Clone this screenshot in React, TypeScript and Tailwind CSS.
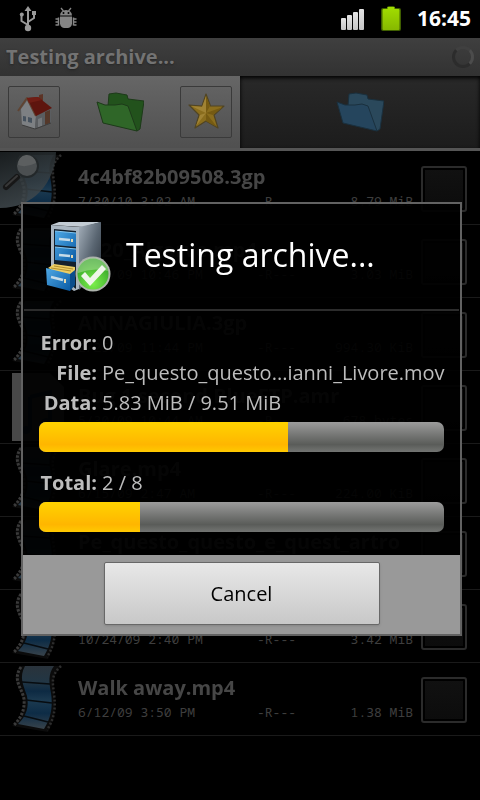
import type { ReactNode } from 'react';

interface ArchiveFile {
  name: string;
  date: string;
  size: string;
  kind: 'video' | 'audio';
}

const files: ArchiveFile[] = [
  { name: '4c4bf82b09508.3gp', date: '7/30/10 3:02 AM', size: '8.79 MiB', kind: 'video' },
  { name: '8520_Algarve.mp4', date: '11/7/09 10:46 PM', size: '3.03 MiB', kind: 'video' },
  { name: 'ANNAGIULIA.3gp', date: '2/25/09 11:44 PM', size: '994.30 KiB', kind: 'video' },
  { name: 'Bug 1 second BlueFTP.amr', date: '5/30/09 10:44 AM', size: '678 bytes', kind: 'audio' },
  { name: 'Glare.mp4', date: '6/15/09 2:47 AM', size: '224.00 KiB', kind: 'video' },
  { name: 'Pe_questo_questo_e_quest_artro', date: '10/24/09 2:38 PM', size: '9.51 MiB', kind: 'video' },
  { name: 'Video_clip.mp4', date: '10/24/09 2:40 PM', size: '3.42 MiB', kind: 'video' },
  { name: 'Walk away.mp4', date: '6/12/09 3:50 PM', size: '1.38 MiB', kind: 'video' },
];

function UsbIcon() {
  return (
    <svg className="h-7 w-5" viewBox="0 0 20 28" fill="none" stroke="#9a9a9a" strokeWidth="2" aria-hidden="true">
      <path d="M10 24V4M10 20L3.500 16V10M10 17L16 13V9" />
      <path d="M10 1l3.500 5h-7z" fill="#9a9a9a" stroke="none" />
      <circle cx="10" cy="23" r="3.200" fill="#9a9a9a" stroke="none" />
      <circle cx="3.800" cy="9.500" r="2" fill="#9a9a9a" stroke="none" />
      <path d="M14 6h4v4h-4z" fill="#9a9a9a" stroke="none" />
    </svg>
  );
}

function DebugIcon() {
  return (
    <svg className="h-6 w-6" viewBox="0 0 24 24" fill="#858585" aria-hidden="true">
      <path d="M6 8.500a6 5.500 0 0 1 12 0z" />
      <path d="M7 1l2.500 3M17 1l-2.500 3" stroke="#858585" strokeWidth="1.300" />
      <path d="M6 9.500h12v7a5 5 0 0 1-4 4.500h-4a5 5 0 0 1-4-4.500z" />
      <path d="M1.500 12h3M1.500 15h3M1.500 18h3M19.500 12h3M19.500 15h3M19.500 18h3M4.500 10.500v8M19.500 10.500v8" fill="none" stroke="#858585" strokeWidth="1.500" />
      <circle cx="9.500" cy="6" r="1" fill="#000" />
      <circle cx="14.500" cy="6" r="1" fill="#000" />
    </svg>
  );
}

function SignalIcon() {
  return (
    <svg className="h-6 w-6" viewBox="0 0 24 24" fill="url(#signal)" aria-hidden="true">
      <defs>
        <linearGradient id="signal" x1="0" y1="0" x2="0" y2="1">
          <stop stopColor="#e4e4e4" />
          <stop offset="1" stopColor="#c4c4c4" />
        </linearGradient>
      </defs>
      <rect x="0" y="11" width="5" height="12" rx="1" />
      <rect x="6" y="8" width="5" height="15" rx="1" />
      <rect x="12" y="5" width="5" height="18" rx="1" />
      <rect x="18" y="2" width="5" height="21" rx="1" />
    </svg>
  );
}

function BatteryIcon() {
  return (
    <svg className="h-7 w-5" viewBox="0 0 20 28" aria-hidden="true">
      <defs>
        <linearGradient id="battery" x1="0" y1="0" x2="0" y2="1">
          <stop stopColor="#a2de00" />
          <stop offset="1" stopColor="#86b800" />
        </linearGradient>
      </defs>
      <path d="M0 5q0-2 2-2h4q0-2 2-2h4q2 0 2 2h4q2 0 2 2v19q0 2-2 2H2q-2 0-2-2z" fill="#3f5e00" />
      <path d="M1.500 5q0-1 1-1H6.500V2h7v2h4q1 0 1 1v19q0 1-1 1h-15q-1 0-1-1z" fill="url(#battery)" />
    </svg>
  );
}

function HouseIcon() {
  return (
    <svg className="size-10" viewBox="0 0 40 40" strokeLinejoin="round" aria-hidden="true">
      <path d="M25 3l4-1v9l-4-3z" fill="#5c3426" />
      <path d="M7 17l6.500-9L22 24l-1 13-13-4z" fill="#7d8083" />
      <path d="M22 24l15-7v14l-16 6z" fill="#5a5d60" />
      <path d="M31 20l5-2v13l-5 2z" fill="#54382a" />
      <path d="M4 19L13 6l9 18" fill="none" stroke="#5f4433" strokeWidth="2" />
      <path d="M13 6l11-1 14 11-16 8z" fill="#5e150e" />
      <path d="M13 6l11-1 4 3-13 3z" fill="#701d14" />
      <path d="M9 24l3 .5v5L9 29zM14 25l4 1v5l-4-1z" fill="#46525e" />
      <path d="M24 27l4-1.500v8.500l-4 1.500z" fill="#74777a" />
      <path d="M8 33l13 4 16-6" fill="none" stroke="#3c3c3c" />
    </svg>
  );
}

function StarIcon() {
  return (
    <svg className="size-10" viewBox="0 0 40 40" strokeLinejoin="round" aria-hidden="true">
      <path d="M20 2l4.500 12L38 14l-10 9 4 13-12-7-11 7 4-13L3 13l13 1z" fill="#8a6d1d" stroke="#504423" strokeWidth="1.200" />
      <path d="M20 4v17l4-7zM37 15l-17 6 7 2zM31 35L20 21v8z" fill="#755a12" />
      <path d="M20 4l-4 11 4 6zM5 14l11 1 4 6zM10 34l10-13-6 2z" fill="#a08334" />
    </svg>
  );
}

function FolderIcon({ color }: { color: 'green' | 'blue' }) {
  const back = color === 'green' ? '#22521c' : '#2a485b';
  const front = color === 'green' ? '#2f6628' : '#25455d';
  const edge = color === 'green' ? '#1d3a19' : '#1a303e';
  return (
    <svg className="h-10 w-12" viewBox="0 0 48 40" strokeLinejoin="round" aria-hidden="true">
      <path d="M12 14l1-12 7-1 11 2 1 4 16 2-4 28-3 2z" fill={back} stroke={edge} />
      <path d="M1 10l8 3h10l7-1 6 2 9 25-34-8z" fill={front} stroke={edge} />
    </svg>
  );
}

function FilmIcon() {
  return (
    <svg className="h-[70px] w-[52px]" viewBox="0 0 52 70" aria-hidden="true">
      <defs>
        <linearGradient id="film" x1="0" y1="0" x2="0" y2="1">
          <stop stopColor="#2a333b" />
          <stop offset="0.250" stopColor="#223644" />
          <stop offset="0.400" stopColor="#0d2a43" />
          <stop offset="0.550" stopColor="#1c3a50" />
          <stop offset="0.750" stopColor="#0d2c46" />
          <stop offset="1" stopColor="#38434b" />
        </linearGradient>
      </defs>
      <path d="M8 2h42c-8 7-9 14-8 26 2 16 1 27-6 40L0 62c10-8 13-16 11-26C8 24-2 16 8 2z" fill="#0b0b0b" />
      <path d="M13 2h29c-6 8-5 16-3 27 2 14 0 25-7 36L6 60c9-9 11-17 9-28C11 20 7 13 13 2z" fill="url(#film)" />
      <path d="M10 18l28 2M14 36l26 3M12 52l24 6" stroke="#070c10" strokeWidth="1.300" />
      <path d="M9 3C0 16 10 24 12 35c1 11-3 19-10 26" fill="none" stroke="#3a3a3a" strokeWidth="3" strokeDasharray="2.500 1.500" />
      <path d="M49 2C38 12 41 19 42 30c2 15 0 25-7 36" fill="none" stroke="#2d2d2d" strokeWidth="2.500" strokeDasharray="2 2" />
    </svg>
  );
}

function AudioIcon() {
  return (
    <svg className="h-[70px] w-[52px]" viewBox="0 0 52 70" aria-hidden="true">
      <path d="M0 1h38l14 14v54H0z" fill="#484848" />
      <path d="M18 25l20-5v30M18 25v33" fill="none" stroke="#142e42" strokeWidth="4" />
      <ellipse cx="14" cy="58" rx="5" ry="4" fill="#142e42" />
      <ellipse cx="34" cy="50" rx="5" ry="4" fill="#142e42" />
    </svg>
  );
}

function SearchCorner() {
  return (
    <svg className="absolute top-0 left-0 h-16 w-16" viewBox="0 0 64 64" aria-hidden="true">
      <defs>
        <linearGradient id="corner" x1="0" y1="0" x2="0.300" y2="1">
          <stop stopColor="#1d2224" />
          <stop offset="1" stopColor="#434c51" />
        </linearGradient>
      </defs>
      <path d="M0 0h56c-1 30-22 56-56 56z" fill="url(#corner)" fillOpacity="0.850" />
      <path d="M6 35l11-10" stroke="#171717" strokeWidth="6" strokeLinecap="round" />
      <path d="M6 34l11-10" stroke="#383838" strokeWidth="2" strokeLinecap="round" />
      <circle cx="27" cy="14" r="11" fill="#4b4f51" stroke="#23282a" strokeWidth="2" />
      <path d="M18 13a9 9 0 0 1 18-2q-10 5-18 2z" fill="#5c5f60" />
    </svg>
  );
}

function CabinetIcon() {
  return (
    <svg className="h-[74px] w-[68px] shrink-0" viewBox="0 0 68 74" aria-hidden="true">
      <defs>
        <linearGradient id="side" x1="0" y1="0" x2="1" y2="1">
          <stop stopColor="#a4afba" />
          <stop offset="0.500" stopColor="#5a6672" />
          <stop offset="1" stopColor="#252d36" />
        </linearGradient>
        <linearGradient id="drawer" x1="0" y1="0" x2="1" y2="1">
          <stop stopColor="#4fa9e6" />
          <stop offset="1" stopColor="#0a5ba4" />
        </linearGradient>
        <radialGradient id="check" cx="0.500" cy="0.800" r="0.800">
          <stop stopColor="#7cf04c" />
          <stop offset="1" stopColor="#2b9a25" />
        </radialGradient>
      </defs>
      <path d="M6 5l8-3h42l-18 5z" fill="#c3ccd4" />
      <path d="M6 5l28 2v62l-5 2L6 55z" fill="#aab6c1" />
      <path d="M34 7l22-5v46L34 70z" fill="url(#side)" />
      <path d="M9 9l22 2v58L9 52z" fill="#14202c" />
      <path d="M10 11l21 2v14l-21-2zM10 27l21 2v13l-21-2z" fill="url(#drawer)" />
      <path d="M10 11l21 2M10 27l21 2" stroke="#84c8f3" />
      <path d="M14 19l11 1M14 35l11 1" stroke="#c6dbe8" strokeWidth="2.500" />
      <path d="M27 19v3M27 35v3" stroke="#e5d9b0" strokeWidth="2" />
      <path d="M3 48l6-4 21 3v8l-5 3z" fill="#edce63" />
      <path d="M6 48l20 3M9 46l19 3" stroke="#b4912f" />
      <path d="M1 48l24 6v17L2 65z" fill="url(#drawer)" />
      <path d="M25 54l5-4v15l-5 6z" fill="#0b4d8b" />
      <path d="M6 57l12 3" stroke="#c6dbe8" strokeWidth="2.500" />
      <path d="M20 59v4" stroke="#e5d9b0" strokeWidth="2" />
      <circle cx="48" cy="54" r="17.500" fill="#aeb4ad" />
      <circle cx="48" cy="54" r="15.500" fill="url(#check)" />
      <path d="M33 53a15 14 0 0 1 30-2q-15-4-30 2z" fill="#b4dfa4" fillOpacity="0.500" />
      <path d="M36 56l4-4 5 6 12-13 4 4-16 17z" fill="#eef6ea" />
    </svg>
  );
}

function StatusBar() {
  return (
    <header className="flex h-[38px] items-center justify-between bg-black pr-[9px] pl-[18px]">
      <div className="flex items-center gap-4">
        <UsbIcon />
        <DebugIcon />
      </div>
      <div className="flex items-center gap-4">
        <SignalIcon />
        <BatteryIcon />
        <time className="text-[21px] font-bold text-white">16:45</time>
      </div>
    </header>
  );
}

function ToolButton({ label, children }: { label: string; children: ReactNode }) {
  return (
    <button
      type="button"
      aria-label={label}
      className="flex size-[52px] items-center justify-center rounded-xs border border-[#3a3a3a] bg-linear-to-b from-[#626262] to-[#525252]"
    >
      {children}
    </button>
  );
}

function FileRow({ file }: { file: ArchiveFile }) {
  return (
    <li className="flex h-[73px] items-center border-b border-[#1a1a1a] pr-[13px] pl-3">
      {file.kind === 'video' ? <FilmIcon /> : <AudioIcon />}
      <div className="ml-[14px] min-w-0 flex-1 pb-[2px]">
        <p className="overflow-hidden mask-r-from-95% text-[20px] leading-7 font-bold whitespace-nowrap text-[#464646]">
          {file.name}
        </p>
        <p className="grid grid-cols-[179px_1fr_auto] font-['Noto_Sans_Mono','DejaVu_Sans_Mono',monospace] text-[13px] leading-5 text-[#3e3e3e]">
          <span>{file.date}</span>
          <span>-R---</span>
          <span>{file.size}</span>
        </p>
      </div>
      <input
        type="checkbox"
        aria-label={file.name}
        className="mt-[2px] ml-2 size-[46px] shrink-0 appearance-none rounded-[3px] border-2 border-[#2b2b2b] bg-linear-to-b from-[#111] to-[#0c0c0c] bg-clip-content p-[2px]"
      />
    </li>
  );
}

function Progress({ label, value }: { label: string; value: number }) {
  return (
    <div
      role="progressbar"
      aria-label={label}
      aria-valuenow={value}
      className="mt-1 h-[30px] overflow-hidden rounded-[7px] bg-linear-to-b from-[#9c9c9c] via-[#5a5c59] via-75% to-[#737573]"
    >
      <div
        className="h-full bg-linear-to-b from-[#ffd300] via-[#ffb600] via-75% to-[#ffc900]"
        style={{ width: `${value}%` }}
      />
    </div>
  );
}

function Field({ label, value }: { label: string; value: string }) {
  return (
    <div className="flex gap-[5px] text-[20px] leading-[30px] whitespace-nowrap text-[#bdbdbd]">
      <dt className="w-[58px] shrink-0 text-right font-bold">{label}</dt>
      <dd>{value}</dd>
    </div>
  );
}

function ProgressDialog() {
  return (
    <div className="fixed inset-x-0 top-[38px] bottom-0 flex items-center justify-center pr-[18px] pl-[21px]">
      <section
        role="dialog"
        aria-labelledby="dialog-title"
        className="w-full max-w-xl border-2 border-[#626262] bg-black/92"
      >
        <div className="mx-[1px] flex h-[107px] items-center gap-[13px] border-b-2 border-[#2c2c2c] pl-[21px]">
          <CabinetIcon />
          <h2 id="dialog-title" className="pb-1 text-[32px] whitespace-nowrap text-white">
            Testing archive...
          </h2>
        </div>
        <div className="px-4 pt-[17px] pb-[23px]">
          <dl>
            <Field label="Error:" value="0" />
            <Field label="File:" value="Pe_questo_questo...ianni_Livore.mov" />
            <Field label="Data:" value="5.83 MiB / 9.51 MiB" />
          </dl>
          <Progress label="Data" value={61.5} />
          <dl className="mt-4">
            <Field label="Total:" value="2 / 8" />
          </dl>
          <Progress label="Total" value={25} />
        </div>
        <div className="flex h-[79px] justify-center bg-[#999] pt-[7px]">
          <button
            type="button"
            className="h-[63px] w-[276px] rounded-xs border border-[#686868] bg-linear-to-b from-[#e8e8e8] to-[#c8c8c8] text-[20px] text-black shadow-sm"
          >
            Cancel
          </button>
        </div>
      </section>
    </div>
  );
}

export default function App() {
  return (
    <div className="min-h-screen bg-black font-['Open_Sans','Noto_Sans',sans-serif]">
      <StatusBar />
      <div className="flex h-[38px] items-center justify-between bg-linear-to-b from-[#3f3f3f] to-[#323232] pr-[6px] pl-[6px]">
        <h1 className="text-[20px] font-bold text-[#737373] text-shadow-md">Testing archive...</h1>
        <div className="size-[22px] rounded-full border-[3px] border-[#2c2c2c] border-t-[#404040] border-r-[#4c4c4c]" />
      </div>
      <nav className="grid h-[76px] grid-cols-2 border-b border-black">
        <div className="flex items-center justify-between border-b-[3px] border-[#555] bg-linear-to-b from-[#666] to-[#505050] px-2">
          <ToolButton label="Home">
            <HouseIcon />
          </ToolButton>
          <FolderIcon color="green" />
          <ToolButton label="Favorites">
            <StarIcon />
          </ToolButton>
        </div>
        <div className="flex items-center justify-center border-b-[3px] border-[#555] bg-linear-to-b from-[#292929] to-[#1c1c1c] inset-shadow-sm inset-shadow-black">
          <FolderIcon color="blue" />
        </div>
      </nav>
      <main className="relative">
        <ul>
          {files.map((file) => (
            <FileRow key={file.name} file={file} />
          ))}
        </ul>
        <SearchCorner />
      </main>
      <ProgressDialog />
    </div>
  );
}
